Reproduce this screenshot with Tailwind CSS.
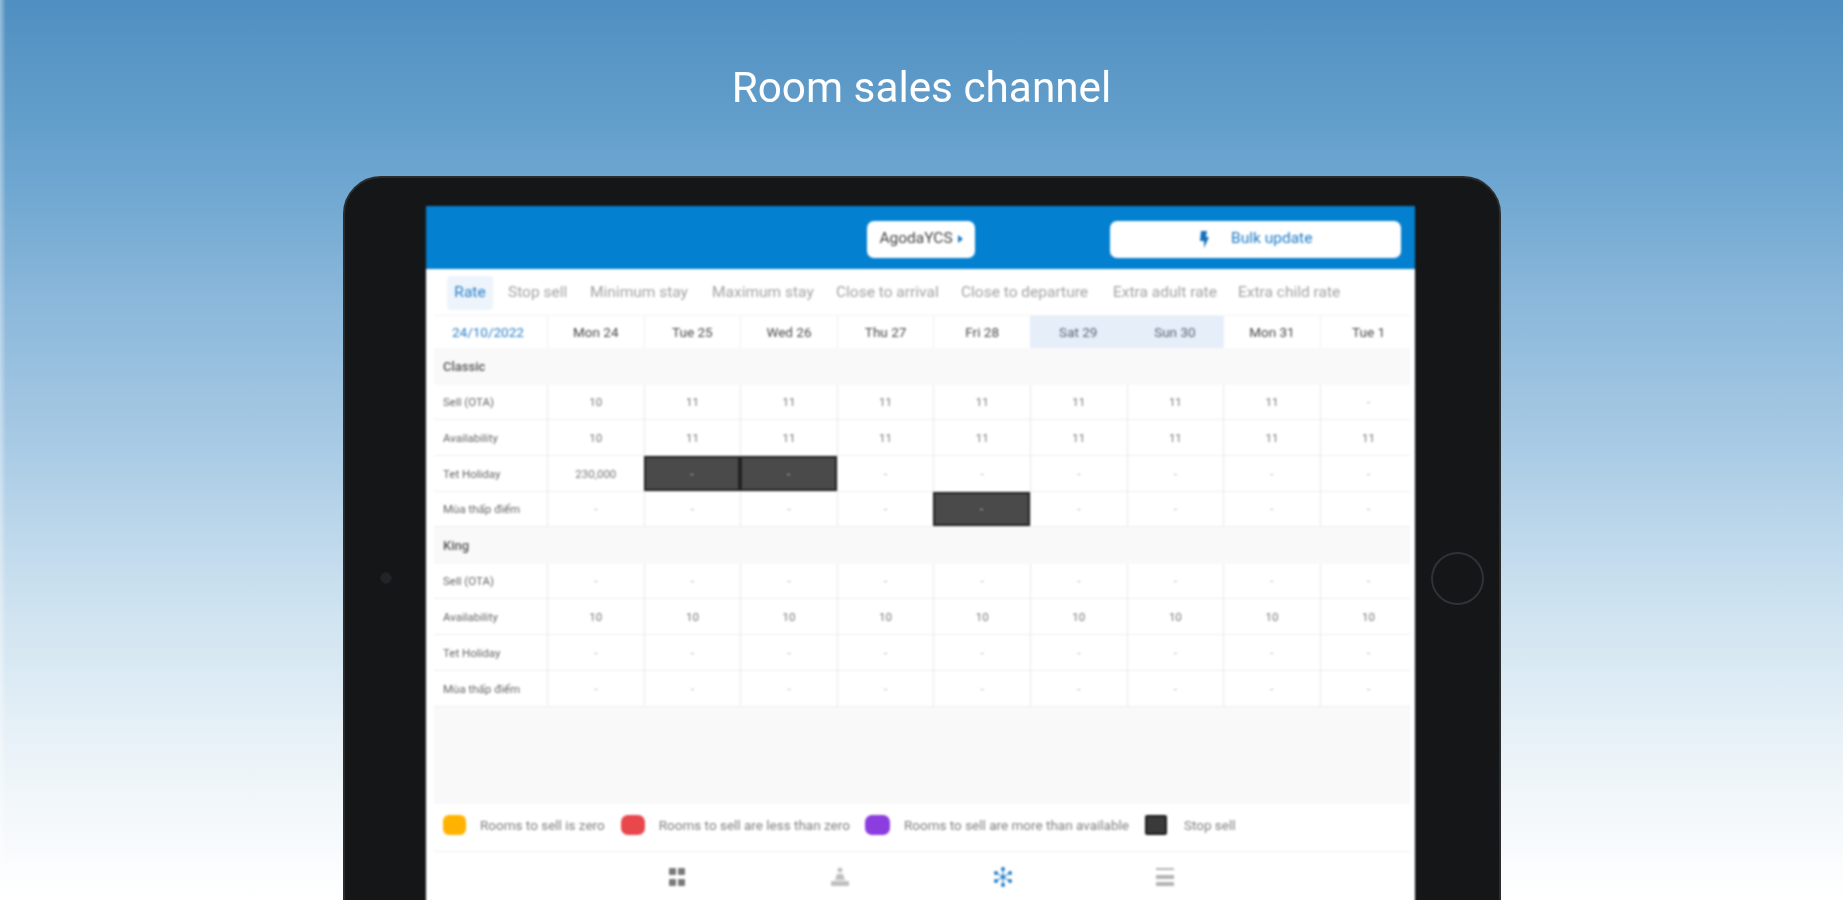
<!DOCTYPE html>
<html lang="en">
<head>
  <meta charset="UTF-8">
  <title>Room sales channel</title>
  <script src="https://cdn.jsdelivr.net/npm/@tailwindcss/browser@4"></script>
</head>
<body class="font-['Roboto',sans-serif]">
  <div class="relative h-[900px] overflow-hidden bg-[linear-gradient(180deg,#4f8fc1_0%,#6da6d0_20%,#8ab7da_33%,#a9cbe5_50%,#cde2f0_67%,#ebf3f8_84%,#ffffff_100%)]">
    <div class="absolute left-0 top-0 h-full w-[6px] bg-gradient-to-r from-white/40 to-transparent"></div>

    <h1 class="pt-[63px] h-[176px] text-center text-[42.3px] leading-[50px] text-white blur-[0.4px]">Room sales channel</h1>

    <!-- tablet, runs past the bottom of the shot -->
    <div class="ml-[343px] w-[1158px] h-[804px] flex rounded-[38px] bg-[#141618] border-2 border-[#2b2c2e]">
      <div class="w-[81px] flex items-center justify-center">
        <div class="w-[12px] h-[12px] rounded-full bg-[#222427] border border-[#1d1f21]"></div>
      </div>

      <div class="w-[989px] mt-[28px] bg-white flex flex-col blur-[0.8px] overflow-hidden">
        <div class="h-[63px] shrink-0 bg-[#0380cf] flex items-center pt-[3px]">
          <button class="ml-[441px] w-[108px] h-[37px] rounded-[7px] bg-white text-[15.5px] text-[#444] flex items-center justify-center gap-[5px]">
            AgodaYCS
            <svg width="5" height="8" viewBox="0 0 5 8"><path d="M0 0l5 4-5 4z" fill="#1a7ac8"/></svg>
          </button>
          <button class="ml-[135px] w-[291px] h-[37px] rounded-[7px] bg-white text-[15.5px] text-[#1a7ac8] flex items-center pl-[89px] gap-[22px]">
            <svg width="10" height="17" viewBox="0 0 10 17"><path d="M2 0h6l-1 6h3L5 17V10H1z" fill="#1670ba"/></svg>
            Bulk update
          </button>
        </div>

        <div class="h-[46px] shrink-0 flex items-center pl-[21px] pt-[2px] text-[15.5px] text-[#a3a3a3] whitespace-nowrap">
          <span class="w-[46px] h-[34px] rounded bg-[#eef4fc] text-[#2a80c8] flex items-center justify-center">Rate</span>
          <span class="ml-[15px] w-[82px]">Stop sell</span>
          <span class="w-[122px]">Minimum stay</span>
          <span class="w-[124px]">Maximum stay</span>
          <span class="w-[125px]">Close to arrival</span>
          <span class="w-[152px]">Close to departure</span>
          <span class="w-[125px]">Extra adult rate</span>
          <span>Extra child rate</span>
        </div>

        <div id="grid" class="ml-[8px] w-[976px] overflow-hidden shrink-0"></div>

        <div class="h-[97.4px] shrink-0 ml-[8px] w-[976px] bg-[#f9f9f9]"></div>

        <div class="h-[48px] shrink-0 ml-[8px] w-[976px] border-b border-[#eeeeee] flex items-center pl-[9px] pb-[4px] text-[13.5px] text-[#808080] whitespace-nowrap">
          <span class="w-[23px] h-[20px] rounded-[6px] bg-[#ffb300]"></span>
          <span class="ml-[14px]">Rooms to sell is zero</span>
          <span class="ml-[16px] w-[24px] h-[20px] rounded-[7px] bg-[#e8474c]"></span>
          <span class="ml-[14px]">Rooms to sell are less than zero</span>
          <span class="ml-[15px] w-[25px] h-[20px] rounded-[7px] bg-[#8b3de0]"></span>
          <span class="ml-[14px]">Rooms to sell are more than available</span>
          <span class="ml-[16px] w-[22px] h-[20px] rounded-[2px] bg-[#3a3a3a] border-2 border-[#1c1c1c]"></span>
          <span class="ml-[17px]">Stop sell</span>
        </div>

        <div class="ml-[8px] w-[976px] flex pt-[15px]">
          <div class="ml-[234px] w-[18px] h-[20px]">
            <svg width="18" height="20" viewBox="0 0 18 20" fill="#7a7a7a"><rect x="1" y="1" width="7" height="7" rx="1"/><rect x="10" y="1" width="7" height="7" rx="1"/><rect x="1" y="12" width="7" height="7" rx="1"/><rect x="10" y="12" width="7" height="7" rx="1"/></svg>
          </div>
          <div class="ml-[145px] w-[18px] h-[20px]">
            <svg width="18" height="20" viewBox="0 0 18 20" fill="#c0c0c0"><circle cx="9" cy="3" r="2.5"/><path d="M6 7h6l2 6H4z"/><rect x="0" y="14" width="18" height="5" rx="1"/></svg>
          </div>
          <div class="ml-[145px] w-[18px] h-[20px]">
            <svg width="18" height="20" viewBox="0 0 18 20" fill="#1a7ac8"><circle cx="9" cy="2" r="2"/><circle cx="9" cy="18" r="2"/><circle cx="2" cy="6" r="2"/><circle cx="16" cy="6" r="2"/><circle cx="2" cy="14" r="2"/><circle cx="16" cy="14" r="2"/><circle cx="9" cy="10" r="2"/><path d="M9 2v16M2 6l14 8M16 6L2 14" stroke="#1a7ac8" stroke-width="1"/></svg>
          </div>
          <div class="ml-[144px] w-[18px] h-[20px]">
            <svg width="18" height="20" viewBox="0 0 18 20" fill="#b4b4b4"><rect y="1" width="18" height="2"/><rect y="8" width="18" height="4"/><rect y="15" width="18" height="4"/></svg>
          </div>
        </div>
      </div>

      <div class="flex-1 flex items-center justify-center">
        <div class="w-[53px] h-[53px] rounded-full border-2 border-[#303336]"></div>
      </div>
    </div>
  </div>

  <script>
    const dayCell = 'flex items-center justify-center border-l border-[#efefef] text-[13.5px] text-[#4a4a4a]';
    const weekendCell = 'flex items-center justify-center bg-[#e6eefa] text-[13.5px] text-[#5a6472]';
    const valueCell = 'flex items-center justify-center border-l border-[#e6e6e6] pt-[2px] text-[11.5px] text-[#777777]';
    const dashCell = 'flex items-center justify-center border-l border-[#e6e6e6] pt-[2px] text-[11.5px] text-[#aaaaaa]';
    const stopCell = 'flex items-center justify-center bg-[#4a4a4a] border-2 border-[#222222] pt-[2px] text-[11.5px] text-[#cccccc]';
    const rowClass = 'grid grid-cols-[113px_repeat(9,96.6px)] h-[35.7px] border-b border-[#eeeeee]';

    const days = ['Mon 24', 'Tue 25', 'Wed 26', 'Thu 27', 'Fri 28', 'Sat 29', 'Sun 30', 'Mon 31', 'Tue 1'];
    const D = '-';
    const sections = [
      { name: 'Classic', rows: [
        { label: 'Sell (OTA)', vals: ['10', '11', '11', '11', '11', '11', '11', '11', D] },
        { label: 'Availability', vals: ['10', '11', '11', '11', '11', '11', '11', '11', '11'] },
        { label: 'Tet Holiday', vals: ['230,000', D, D, D, D, D, D, D, D], stop: [1, 2] },
        { label: 'Mùa thấp điểm', vals: [D, D, D, D, D, D, D, D, D], stop: [4] }
      ]},
      { name: 'King', rows: [
        { label: 'Sell (OTA)', vals: [D, D, D, D, D, D, D, D, D] },
        { label: 'Availability', vals: ['10', '10', '10', '10', '10', '10', '10', '10', '10'] },
        { label: 'Tet Holiday', vals: [D, D, D, D, D, D, D, D, D] },
        { label: 'Mùa thấp điểm', vals: [D, D, D, D, D, D, D, D, D] }
      ]}
    ];

    let html = '<div class="grid grid-cols-[113px_repeat(9,96.6px)] h-[33px] border-t border-[#f2f2f2]">'
      + '<div class="flex items-center pl-[18px] text-[13.5px] text-[#2a80c8]">24/10/2022</div>'
      + days.map((d, i) => `<div class="${i === 5 || i === 6 ? weekendCell : dayCell}">${d}</div>`).join('')
      + '</div>';

    sections.forEach(s => {
      html += `<div class="h-[36.5px] bg-[#f9f9f9] flex items-center pl-[9px] text-[13px] font-medium text-[#555555]">${s.name}</div>`;
      s.rows.forEach(r => {
        html += `<div class="${rowClass}"><div class="flex items-center pl-[9px] pt-[2px] text-[11.5px] text-[#666666]">${r.label}</div>`
          + r.vals.map((v, i) => {
            if ((r.stop || []).includes(i)) return `<div class="${stopCell}">${v}</div>`;
            return `<div class="${v === D ? dashCell : valueCell}">${v}</div>`;
          }).join('')
          + '</div>';
      });
    });
    document.getElementById('grid').innerHTML = html;
  </script>
</body>
</html>
